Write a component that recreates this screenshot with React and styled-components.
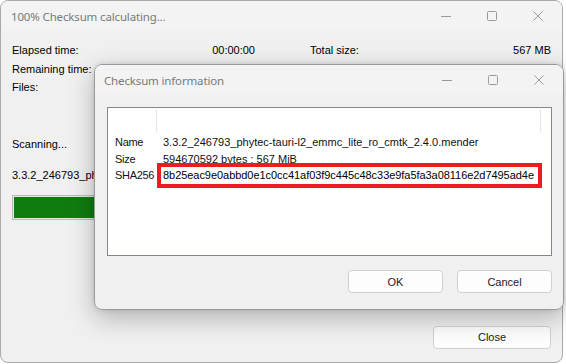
import React from "react";
import styled, { createGlobalStyle } from "styled-components";

const Global = createGlobalStyle`
  html, body { margin: 0; padding: 0; background: #ffffff; }
  body { font-family: "Liberation Sans", Arial, sans-serif; font-size: 11px; color: #000; }
  * { box-sizing: border-box; }
`;

const Stage = styled.div`
  position: relative;
  width: 566px;
  height: 364px;
  overflow: hidden;
`;

const Window = styled.div`
  width: ${(p) => p.$w}px;
  height: ${(p) => p.$h}px;
  border: 1px solid ${(p) => p.$border || "#a9a9a9"};
  border-radius: 8px;
  background: #f0f0f0;
  display: flex;
  flex-direction: column;
  overflow: hidden;
`;

const DialogLayer = styled.div`
  position: absolute;
  left: 94px;
  top: 64px;
  border-radius: 8px;
  box-shadow: 0 8px 26px rgba(0, 0, 0, 0.26), 0 0 5px rgba(0, 0, 0, 0.12);
`;

const TitleBar = styled.div`
  height: ${(p) => p.$h}px;
  flex: none;
  background: #f3f3f3;
  display: flex;
  align-items: center;
  padding-left: ${(p) => p.$pl}px;
`;

const TitleText = styled.div`
  flex: 1;
  font-family: "Noto Sans", "Open Sans", sans-serif;
  font-size: 11.5px;
  color: #7a7a7a;
  letter-spacing: -0.15px;
`;

const CaptionButtons = styled.div`
  display: flex;
  height: 100%;
  margin-right: 1px;
`;

const CaptionButton = styled.div`
  width: 46px;
  height: 100%;
  display: flex;
  align-items: center;
  justify-content: center;
  color: #9a9a9a;
`;

const Body = styled.div`
  flex: 1;
  display: flex;
  flex-direction: column;
  padding: ${(p) => p.$pad};
`;

const StatsGrid = styled.div`
  display: grid;
  grid-template-columns: 243px 241px;
  column-gap: 55px;
  row-gap: 1px;
`;

const StatCell = styled.div`
  display: flex;
  justify-content: space-between;
  height: 17.5px;
  line-height: 17.5px;
  white-space: nowrap;
`;

const Line = styled.div`
  height: 18px;
  line-height: 18px;
  margin-top: ${(p) => p.$mt}px;
  white-space: nowrap;
  overflow: hidden;
  max-width: ${(p) => p.$maxw || "none"};
`;

const ProgressTrack = styled.div`
  margin-top: 11px;
  height: 25px;
  border: 1px solid #bcbcbc;
  background: #e6e6e6;
  padding: 1px;
`;

const ProgressFill = styled.div`
  height: 100%;
  background: #107c10;
`;

const ButtonRow = styled.div`
  display: flex;
  justify-content: flex-end;
  gap: 14px;
  margin-top: ${(p) => p.$mt}px;
`;

const Button = styled.div`
  width: ${(p) => p.$w}px;
  height: 23px;
  border: 1px solid #d0d0d0;
  border-radius: 4px;
  background: #fdfdfd;
  display: flex;
  align-items: center;
  justify-content: center;
  font-size: 11px;
  color: #1a1a1a;
`;

const Panel = styled.div`
  width: 445px;
  height: 149px;
  border: 1px solid #82878f;
  background: #ffffff;
  display: flex;
  flex-direction: column;
`;

const HeaderStrip = styled.div`
  height: 24px;
  display: grid;
  grid-template-columns: 49px 384px 1fr;
  padding-top: 1px;
`;

const HeaderCol = styled.div`
  border-right: ${(p) => (p.$line ? "1px solid #e5e5e5" : "none")};
`;

const InfoRows = styled.div`
  display: grid;
  grid-template-columns: 42px 1fr;
  grid-auto-rows: 16.5px;
  align-items: center;
  margin-top: 2px;
  padding-left: 7px;
`;

const InfoLabel = styled.div`
  white-space: nowrap;
  color: #111;
  letter-spacing: -0.3px;
`;

const InfoValue = styled.div`
  white-space: nowrap;
  padding-left: 6px;
  color: #111;
`;

const HighlightValue = styled.div`
  white-space: nowrap;
  width: 385px;
  height: 25px;
  border: 4px solid #ed1c24;
  padding-left: 2px;
  line-height: 17px;
  align-self: center;
  color: #000;
  letter-spacing: -0.05px;
`;

const Minimize = () => (
  <svg width="10" height="10" viewBox="0 0 10 10">
    <line x1="0" y1="5.5" x2="10" y2="5.5" stroke="currentColor" strokeWidth="1" />
  </svg>
);
const Maximize = () => (
  <svg width="10" height="10" viewBox="0 0 10 10">
    <rect x="0.5" y="0.5" width="9" height="9" rx="1" fill="none" stroke="currentColor" strokeWidth="1" />
  </svg>
);
const CloseX = () => (
  <svg width="10" height="10" viewBox="0 0 10 10">
    <path d="M0.5 0.5 L9.5 9.5 M9.5 0.5 L0.5 9.5" stroke="currentColor" strokeWidth="1" fill="none" />
  </svg>
);

const Caption = ({ title, h, pl }) => (
  <TitleBar $h={h} $pl={pl}>
    <TitleText>{title}</TitleText>
    <CaptionButtons>
      <CaptionButton><Minimize /></CaptionButton>
      <CaptionButton><Maximize /></CaptionButton>
      <CaptionButton><CloseX /></CaptionButton>
    </CaptionButtons>
  </TitleBar>
);

const hash = "8b25eac9e0abbd0e1c0cc41af03f9c445c48c33e9fa5fa3a08116e2d7495ad4e";

export default function App() {
  return (
    <>
      <Global />
      <Stage>
        <Window $w={563} $h={363}>
          <Caption title="100% Checksum calculating..." h={30} pl={10} />
          <Body $pad="11px 11px 0 11px">
            <StatsGrid>
              <StatCell><span>Elapsed time:</span><span>00:00:00</span></StatCell>
              <StatCell><span>Total size:</span><span>567 MB</span></StatCell>
              <StatCell><span>Remaining time:</span><span>00:00:00</span></StatCell>
              <StatCell><span>Speed:</span><span>1910 MB/s</span></StatCell>
              <StatCell><span>Files:</span><span></span></StatCell>
              <StatCell><span></span><span></span></StatCell>
            </StatsGrid>
            <Line $mt={38}>Scanning...</Line>
            <Line $mt={13} $maxw="82px">3.3.2_246793_phytec-tauri-l2_emmc_lite_ro_cmtk_2.4.0.mender</Line>
            <ProgressTrack>
              <ProgressFill style={{ width: "100%" }} />
            </ProgressTrack>
            <ButtonRow $mt={106}>
              <Button $w={118}>Close</Button>
            </ButtonRow>
          </Body>
        </Window>

        <DialogLayer>
          <Window $w={470} $h={246} $border="#9a9a9a">
            <Caption title="Checksum information" h={30} pl={9} />
            <Body $pad="12px 11px 0 12px">
              <Panel>
                <HeaderStrip>
                  <HeaderCol $line />
                  <HeaderCol $line />
                  <HeaderCol />
                </HeaderStrip>
                <InfoRows>
                  <InfoLabel>Name</InfoLabel>
                  <InfoValue>3.3.2_246793_phytec-tauri-l2_emmc_lite_ro_cmtk_2.4.0.mender</InfoValue>
                  <InfoLabel>Size</InfoLabel>
                  <InfoValue>594670592 bytes : 567 MiB</InfoValue>
                  <InfoLabel>SHA256</InfoLabel>
                  <HighlightValue>{hash}</HighlightValue>
                </InfoRows>
              </Panel>
              <ButtonRow $mt={14}>
                <Button $w={95}>OK</Button>
                <Button $w={95}>Cancel</Button>
              </ButtonRow>
            </Body>
          </Window>
        </DialogLayer>
      </Stage>
    </>
  );
}
